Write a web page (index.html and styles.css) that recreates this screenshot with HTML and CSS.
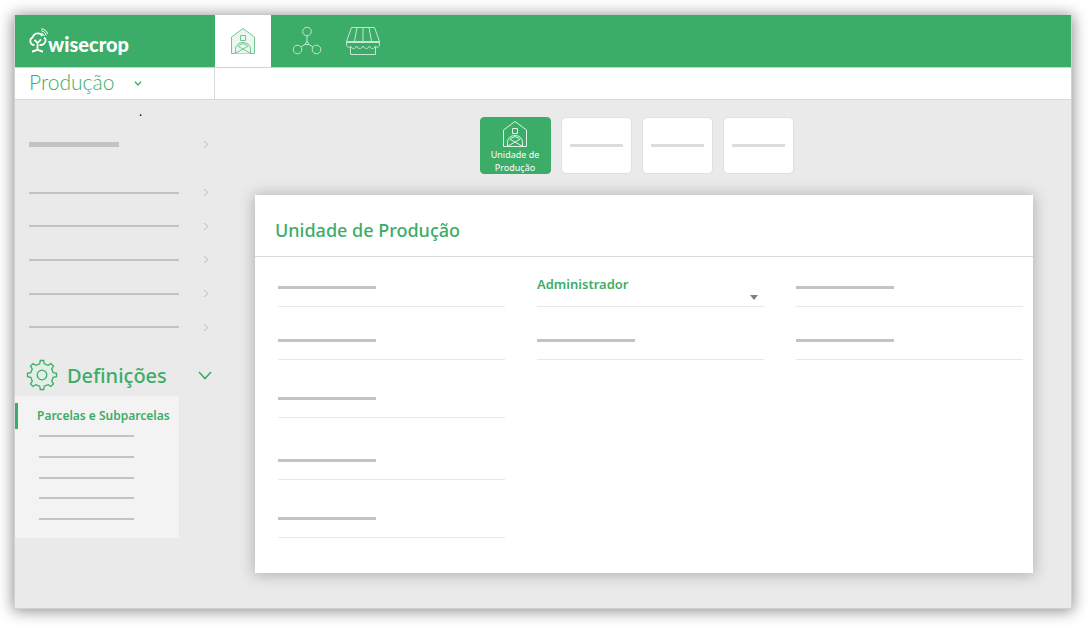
FILE: index.html
```html
<!DOCTYPE html>
<html lang="pt">
<head>
    <meta charset="UTF-8">
    <meta name="viewport" content="width=device-width, initial-scale=1.0">
    <title>Wisecrop - Unidade de Produção</title>
    <link rel="stylesheet" href="styles.css">
</head>
<body>
    <!-- Barn shape shared by the top bar and the section tab -->
    <svg class="symbols" width="0" height="0" aria-hidden="true">
        <symbol id="barn" viewBox="0 0 26 28">
            <path d="M1.500 26.500V10L13 1.500L24.500 10V26.500Z" />
            <path d="M10.500 8.500h5v5h-5z" />
            <path d="M5.500 26.500V22.500C5.500 18 9 15.500 13 15.500S20.500 18 20.500 22.500V26.500M7.500 19L20 26M18.500 19L6 26M8.500 18.500L13 16.500L17.500 18.500" />
        </symbol>
    </svg>

    <div class="window">
        <header class="topBar">
            <a class="brand" href="#">
                <svg width="19" height="26" viewBox="0 0 19 26" aria-hidden="true">
                    <path d="M5.500 17.200C3 17.200 1.300 15.200 1.300 13C1.300 11 2.500 9.800 3.700 9.300C4.500 6.500 6.500 5.300 9 5.300C11 5.300 12.500 6.300 13.300 8M15 9.500C16.700 10.500 17 12.500 16 14.300C15 16.200 13.500 17 11.500 17H10.500" stroke-width="1.800" />
                    <path d="M8.500 23V14.500M5.500 11.800L8.500 15L12 11.300M3 23.500C5.500 23.500 6.500 21.800 8.500 21.800S11.500 23.500 14 23.500" stroke-width="1.800" />
                    <path d="M12.300 5.200C14 5.500 15 6.500 15.300 8M12.300 2.800C15 3.200 16.700 4.800 17 7.500M12.300 0.800C16 1 18 3.500 18.500 6" stroke-width="1" />
                </svg>
                <span>wisecrop</span>
            </a>
            <nav class="modules">
                <a class="module active" href="#" aria-label="Produção">
                    <svg width="26" height="28"><use href="#barn" /></svg>
                </a>
                <a class="module" href="#" aria-label="Rede">
                    <svg width="30" height="30" viewBox="0 0 30 30">
                        <circle cx="15" cy="5.500" r="4.300" />
                        <circle cx="5.500" cy="23.500" r="4.300" />
                        <circle cx="24.500" cy="23.500" r="4.300" />
                        <path d="M15 10V15L13 18.500H17L15 15M13 18.500L9 21M17 18.500L21 21" />
                    </svg>
                </a>
                <a class="module" href="#" aria-label="Mercado">
                    <svg width="36" height="30" viewBox="0 0 36 30">
                        <path d="M1.500 15.500L6.500 1.500H29.500L34.500 15.500M12 1.500L9.500 15M18 1.500V15M24 1.500L26.500 15M5.500 21V28.500H30.500V21" />
                        <path d="M1.500 15.500H34.500V19.500C33.500 21.500 31.500 22 30.500 20C28.500 23.500 26 23.500 24.500 20C22.500 23.500 20 23.500 18 20C16 23.500 13.500 23.500 11.500 20C10 23.500 7.500 23.500 5.500 20C4.500 22 2.500 21.500 1.500 19.500ZM1.500 16.500H34.500" />
                    </svg>
                </a>
            </nav>
        </header>

        <div class="subBar">
            <button class="moduleMenu" type="button">
                <span>Produção</span>
                <svg width="8" height="5" viewBox="0 0 8 5" aria-hidden="true"><path d="M1 0.800L4 4L7 0.800" stroke-width="1.300" /></svg>
            </button>
        </div>

        <div class="content">
            <aside class="sidebar">
                <p class="dot">.</p>
                <button class="navRow" type="button" aria-label="Menu">
                    <span class="bar thick"></span>
                    <svg class="chevron" width="6" height="9" viewBox="0 0 6 9"><path d="M1 1L5 4.500L1 8" /></svg>
                </button>
                <nav class="navList">
                    <button class="navRow" type="button" aria-label="Item 1">
                        <span class="bar long"></span>
                        <svg class="chevron" width="6" height="9" viewBox="0 0 6 9"><path d="M1 1L5 4.500L1 8" /></svg>
                    </button>
                    <button class="navRow" type="button" aria-label="Item 2">
                        <span class="bar long"></span>
                        <svg class="chevron" width="6" height="9" viewBox="0 0 6 9"><path d="M1 1L5 4.500L1 8" /></svg>
                    </button>
                    <button class="navRow" type="button" aria-label="Item 3">
                        <span class="bar long"></span>
                        <svg class="chevron" width="6" height="9" viewBox="0 0 6 9"><path d="M1 1L5 4.500L1 8" /></svg>
                    </button>
                    <button class="navRow" type="button" aria-label="Item 4">
                        <span class="bar long"></span>
                        <svg class="chevron" width="6" height="9" viewBox="0 0 6 9"><path d="M1 1L5 4.500L1 8" /></svg>
                    </button>
                    <button class="navRow" type="button" aria-label="Item 5">
                        <span class="bar long"></span>
                        <svg class="chevron" width="6" height="9" viewBox="0 0 6 9"><path d="M1 1L5 4.500L1 8" /></svg>
                    </button>
                </nav>

                <button class="settings" type="button" aria-expanded="true">
                    <svg width="32" height="32" viewBox="-16 -16 32 32" aria-hidden="true">
                        <path class="gear" d="M-1.700 -14.500H1.700L2.300 -11.200L6.200 -9.700L8.900 -11.500L11.500 -8.900L9.700 -6.200L11.200 -2.300L14.500 -1.700V1.700L11.200 2.300L9.700 6.200L11.500 8.900L8.900 11.500L6.200 9.700L2.300 11.200L1.700 14.500H-1.700L-2.300 11.200L-6.200 9.700L-8.900 11.500L-11.500 8.900L-9.700 6.200L-11.200 2.300L-14.500 1.700V-1.700L-11.200 -2.300L-9.700 -6.200L-11.500 -8.900L-8.900 -11.500L-6.200 -9.700L-2.300 -11.200Z" stroke-width="1.300" />
                        <circle r="4.800" stroke-width="1.300" />
                    </svg>
                    <span class="settingsLabel">Definições</span>
                    <svg width="14" height="9" viewBox="0 0 14 9" aria-hidden="true"><path d="M1 1L7 7.500L13 1" stroke-width="1.600" /></svg>
                </button>
                <div class="subMenu">
                    <a class="subItem" href="#">Parcelas e Subparcelas</a>
                    <div class="subBars">
                        <span class="bar short"></span>
                        <span class="bar short"></span>
                        <span class="bar short"></span>
                        <span class="bar short"></span>
                        <span class="bar short"></span>
                    </div>
                </div>
            </aside>

            <main class="main">
                <div class="tabs">
                    <button class="tab active" type="button">
                        <svg width="26" height="28" aria-hidden="true"><use href="#barn" /></svg>
                        <span>Unidade de Produção</span>
                    </button>
                    <button class="tab" type="button" aria-label="Separador 2"><span class="tabBar"></span></button>
                    <button class="tab" type="button" aria-label="Separador 3"><span class="tabBar"></span></button>
                    <button class="tab" type="button" aria-label="Separador 4"><span class="tabBar"></span></button>
                </div>

                <section class="card">
                    <h1>Unidade de Produção</h1>
                    <div class="fields">
                        <div class="field"><span class="fieldBar"></span></div>
                        <div class="field selectField">
                            <select aria-label="Perfil">
                                <option>Administrador</option>
                            </select>
                        </div>
                        <div class="field"><span class="fieldBar"></span></div>
                        <div class="field"><span class="fieldBar"></span></div>
                        <div class="field"><span class="fieldBar"></span></div>
                        <div class="field"><span class="fieldBar"></span></div>
                        <div class="field first"><span class="fieldBar"></span></div>
                        <div class="field first"><span class="fieldBar"></span></div>
                        <div class="field first"><span class="fieldBar"></span></div>
                    </div>
                </section>
            </main>
        </div>
    </div>
</body>
</html>
```
FILE: styles.css
```css
* {
    box-sizing: border-box;
}

body {
    margin: 0;
    padding: 15px 20px 22px 14px;
    background: #fff;
    color: #3bad68;
    font-family: "Noto Sans", "Open Sans", sans-serif;
}

button {
    margin: 0;
    padding: 0;
    border: 0;
    background: none;
    color: inherit;
    font: inherit;
    cursor: pointer;
}

a {
    color: inherit;
    text-decoration: none;
}

svg {
    display: block;
    flex: none;
    fill: none;
    stroke: currentColor;
}

.symbols {
    position: absolute;
}

.window {
    display: flex;
    flex-direction: column;
    min-height: calc(100vh - 37px);
    background: #eaeaea;
    border: 1px solid #d2d2d2;
    border-top: 0;
    box-shadow: 0 1px 14px 1px rgba(0, 0, 0, 0.45);
}

/* Top bar */
.topBar {
    display: flex;
    height: 52px;
    background: #3bad68;
    color: #fff;
}

.brand {
    display: flex;
    width: 200px;
    padding: 13px 0 0 14px;
    font-family: Lato, sans-serif;
    font-size: 20px;
    font-weight: 900;
    line-height: 32px;
}

.modules {
    display: flex;
}

.module {
    display: flex;
    align-items: center;
    justify-content: center;
    width: 56px;
}

.module + .module {
    margin-left: 8px;
}

.module + .module + .module {
    margin-left: 0;
}

.module svg {
    opacity: 0.7;
}

.module.active {
    background: #fff;
    color: #3bad68;
}

.module.active svg {
    fill: #e3f3e9;
}

.subBar {
    height: 33px;
    background: #fff;
    border-top: 1px solid #d2d2d2;
    border-bottom: 1px solid #d9d9d9;
}

.moduleMenu {
    display: flex;
    align-items: center;
    gap: 20px;
    width: 200px;
    height: 31px;
    padding: 0 0 4px 14px;
    border-right: 1px solid #d9d9d9;
    font-family: Lato, sans-serif;
    font-size: 21px;
    font-weight: 300;
    line-height: 26px;
}

.moduleMenu svg {
    margin-top: 4px;
}

/* Sidebar */
.content {
    display: flex;
    flex: 1;
}

.sidebar {
    flex: none;
    width: 200px;
}

.dot {
    margin: 0;
    padding-left: 124px;
    height: 27px;
    color: #000;
    font-size: 12px;
    line-height: 24px;
}

.navRow {
    display: flex;
    align-items: center;
    justify-content: space-between;
    width: 100%;
    height: 34px;
    padding: 0 6px 0 14px;
    color: #bdbdbd;
}

.navList {
    display: grid;
    height: 168px;
    margin-top: 15px;
}

.navList .navRow {
    height: auto;
}

.bar {
    display: block;
    height: 2px;
    background: #c3c3c3;
}

.bar.thick {
    width: 90px;
    height: 5px;
}

.bar.long {
    width: 150px;
}

.bar.short {
    width: 95px;
}

.settings {
    display: flex;
    align-items: center;
    width: 100%;
    height: 40px;
    margin-top: 12px;
    padding: 0 3px 2px 11px;
    font-size: 20px;
    font-weight: 500;
}

.gear {
    fill: #e1efe5;
}

.settingsLabel {
    flex: 1;
    padding-left: 9px;
    text-align: left;
}

.subMenu {
    width: 164px;
    height: 142px;
    padding-top: 7px;
    background: #f3f3f3;
}

.subItem {
    display: block;
    padding-left: 19px;
    border-left: 3px solid #3bad68;
    font-size: 12px;
    font-weight: 600;
    line-height: 26px;
    white-space: nowrap;
}

.subBars {
    display: flex;
    flex-direction: column;
    justify-content: space-between;
    height: 85px;
    margin-top: 6px;
    padding-left: 24px;
}

/* Main area */
.main {
    flex: 1;
    min-width: 0;
    padding: 17px 38px 35px 40px;
}

.tabs {
    display: flex;
    justify-content: center;
    gap: 10px;
    padding-right: 15px;
}

.tab {
    display: flex;
    flex-direction: column;
    align-items: center;
    justify-content: center;
    width: 71px;
    height: 57px;
    background: #fff;
    border: 1px solid #e0e0e0;
    border-radius: 5px;
}

.tab.active {
    justify-content: flex-start;
    padding: 2px 10px 0;
    background: #3bad68;
    border-color: #3bad68;
    border-radius: 4px;
    color: #fff;
    font-size: 9px;
    line-height: 13px;
}

.tab.active svg {
    opacity: 0.85;
}

.tabBar {
    width: 53px;
    height: 3px;
    background: #dcdcdc;
}

.card {
    margin-top: 21px;
    padding-bottom: 35px;
    background: #fff;
    box-shadow: 0 1px 14px 1px rgba(0, 0, 0, 0.25);
}

.card h1 {
    margin: 0;
    padding: 22px 20px 13px;
    border-bottom: 1px solid #d9d9d9;
    font-size: 18px;
    font-weight: 500;
    line-height: 26px;
}

.fields {
    display: grid;
    grid-template-columns: repeat(3, 1fr);
    grid-template-rows: 50px 53px 58px 62px 58px;
    align-items: end;
    column-gap: 32px;
    padding: 0 10px 0 23px;
}

.field {
    height: 21px;
    border-bottom: 1px solid #e8e8e8;
}

.field.first {
    grid-column: 1;
}

.fieldBar {
    display: block;
    width: 98px;
    height: 3px;
    background: #c3c3c3;
}

.selectField {
    position: relative;
    height: 34px;
}

.selectField select {
    display: block;
    width: 100%;
    height: 22px;
    padding: 0;
    border: 0;
    background: none;
    appearance: none;
    color: inherit;
    font-family: inherit;
    font-size: 13px;
    font-weight: 600;
}

.selectField::after {
    content: "";
    position: absolute;
    right: 6px;
    bottom: 6px;
    border: 4px solid transparent;
    border-top: 5px solid #808080;
    border-bottom: 0;
    pointer-events: none;
}
```
